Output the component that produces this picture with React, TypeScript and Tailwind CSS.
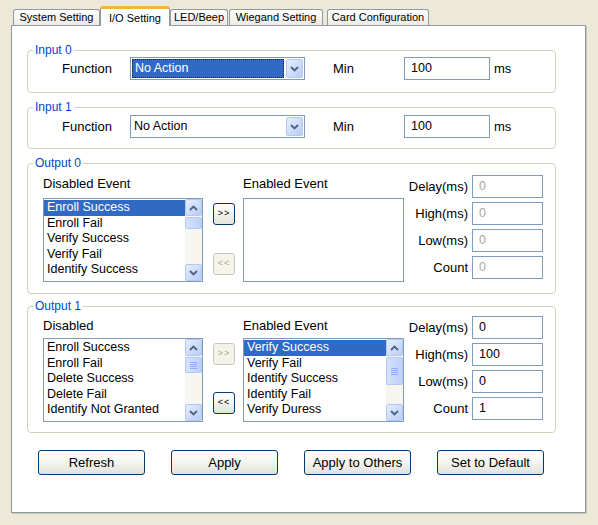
import React from 'react';

// XP-style "I/O Setting" property page

const ff = "font-['Liberation_Sans',Arial,sans-serif]";

function Chevron({ up = false }: { up?: boolean }) {
  return (
    <svg width="9" height="6" viewBox="0 0 9 6">
      <polyline
        points={up ? '1,5 4.5,1.5 8,5' : '1,1 4.5,4.5 8,1'}
        fill="none"
        stroke="#4D6185"
        strokeWidth="1.8"
      />
    </svg>
  );
}

function ArrowBox({ up = false, className = '' }: { up?: boolean; className?: string }) {
  return (
    <div
      className={`flex shrink-0 items-center justify-center rounded-[2px] border border-[#B4C8F4] bg-linear-to-br from-[#E6EEFE] to-[#B9CCF7] ${className}`}
    >
      <Chevron up={up} />
    </div>
  );
}

function ScrollBar({ thumb, grip = false }: { thumb: string; grip?: boolean }) {
  return (
    <div className="flex h-full w-[17px] shrink-0 flex-col bg-[#F6F5F0]">
      <ArrowBox up className="h-[17px] w-[17px]" />
      <div className="flex-1">
        <div
          className={`flex w-[17px] flex-col items-center justify-center gap-[1px] rounded-[2px] border border-[#B4C8F4] bg-linear-to-r from-[#D6E2FD] to-[#BDD0F8] ${thumb}`}
        >
          {grip && (
            <>
              <div className="h-[1px] w-[7px] bg-[#8DAEF6]" />
              <div className="h-[1px] w-[7px] bg-[#8DAEF6]" />
              <div className="h-[1px] w-[7px] bg-[#8DAEF6]" />
              <div className="h-[1px] w-[7px] bg-[#8DAEF6]" />
            </>
          )}
        </div>
      </div>
      <ArrowBox className="h-[17px] w-[17px]" />
    </div>
  );
}

function ListBox({
  items,
  selected = -1,
  thumb = '',
  grip = false,
}: {
  items: string[];
  selected?: number;
  thumb?: string;
  grip?: boolean;
}) {
  return (
    <div className="flex h-[84px] w-full border border-[#7F9DB9] bg-white">
      <div className="flex-1 overflow-hidden pt-[1px]">
        {items.map((t, i) => (
          <div
            key={t}
            className={`h-[15.5px] whitespace-nowrap pl-[3px] text-[12.5px] leading-[15.5px] ${
              i === selected ? 'bg-[#316AC5] text-white' : 'text-black'
            }`}
          >
            {t}
          </div>
        ))}
      </div>
      {items.length > 0 && <ScrollBar thumb={thumb} grip={grip} />}
    </div>
  );
}

function SmallBtn({ label, disabled = false }: { label: string; disabled?: boolean }) {
  return (
    <div
      className={`flex h-[22px] w-[22px] items-center justify-center rounded-[3px] border text-[9px] tracking-[1px] ${
        disabled
          ? 'border-[#C9C7BA] bg-[#F5F4EA] text-[#ACA899]'
          : 'border-[#003C74] bg-linear-to-b from-white to-[#E4E3DB] text-black'
      }`}
    >
      {label}
    </div>
  );
}

function Edit({ value, disabled = false, w }: { value: string; disabled?: boolean; w: string }) {
  return (
    <div
      className={`flex h-[23px] items-center border border-[#7F9DB9] bg-white pl-[6px] text-[12.5px] ${w} ${
        disabled ? 'text-[#ACA899]' : 'text-black'
      }`}
    >
      {value}
    </div>
  );
}

function Combo({ focused = false }: { focused?: boolean }) {
  return (
    <div className="flex h-[23px] w-[175px] border border-[#7F9DB9] bg-white p-[1px]">
      <div className="mr-[2px] flex-1">
        <div
          className={`flex h-full items-center pl-[2px] text-[12.5px] ${
            focused ? 'border border-dotted border-[#222] bg-[#316AC5] text-white' : 'text-black'
          }`}
        >
          No Action
        </div>
      </div>
      <ArrowBox className="h-full w-[17px]" />
    </div>
  );
}

function Group({ title, h, mt, children }: { title: string; h: string; mt: string; children: React.ReactNode }) {
  return (
    <fieldset className={`w-[529px] rounded-[4px] border border-[#D0D0BF] ${h} ${mt}`}>
      <legend className="ml-[5px] px-[2px] text-[12px] leading-[14px] text-[#0046D5]">{title}</legend>
      {children}
    </fieldset>
  );
}

function InputRow({ focused = false }: { focused?: boolean }) {
  return (
    <div className="flex h-[23px] items-center pl-[34px] text-[13px]">
      <span className="w-[68px]">Function</span>
      <Combo focused={focused} />
      <span className="ml-[28px] w-[71px]">Min</span>
      <Edit value="100" w="w-[86px]" />
      <span className="ml-[4px]">ms</span>
    </div>
  );
}

function Timing({ values, disabled = false, pt }: { values: string[]; disabled?: boolean; pt: string }) {
  const labels = ['Delay(ms)', 'High(ms)', 'Low(ms)', 'Count'];
  return (
    <div className={`flex w-[139px] flex-col gap-[4px] ${pt}`}>
      {labels.map((l, i) => (
        <div key={l} className="flex h-[23px] items-center justify-end gap-[4px] text-[13px]">
          <span>{l}</span>
          <Edit value={values[i]} disabled={disabled} w="w-[71px]" />
        </div>
      ))}
    </div>
  );
}

export default function App() {
  const tabs = [
    { label: 'System Setting', w: 'w-[87px]', ml: '' },
    { label: 'I/O Setting', w: 'w-[70px]', ml: '', active: true },
    { label: 'LED/Beep', w: 'w-[58px]', ml: '' },
    { label: 'Wiegand Setting', w: 'w-[94px]', ml: 'ml-[1px]' },
    { label: 'Card Configuration', w: 'w-[102px]', ml: 'ml-[4px]' },
  ];

  return (
    <div className={`h-[525px] w-[598px] bg-[#ECE9D8] pt-[6px] text-black ${ff}`}>
      {/* tab strip */}
      <div className="flex h-[19px] items-end pl-[13px]">
        {tabs.map((t) =>
          t.active ? (
            <div
              key={t.label}
              className={`relative z-10 -mb-[1px] flex h-[20px] justify-center rounded-t-[3px] border-x border-t-[3px] border-x-[#919B9C] border-t-[#F7B13C] bg-white pt-[1px] text-[11px] ${t.w} ${t.ml}`}
            >
              {t.label}
            </div>
          ) : (
            <div
              key={t.label}
              className={`flex h-[16px] items-center justify-center rounded-t-[3px] border-x border-t border-[#919B9C] bg-linear-to-b from-white to-[#ECEBE5] text-[11px] ${t.w} ${t.ml}`}
            >
              {t.label}
            </div>
          )
        )}
      </div>

      {/* page */}
      <div className="ml-[11px] h-[488px] w-[575px] border border-[#919B9C] bg-white pl-[15px] pt-[17px] shadow-[1px_1px_0_#C9C6B6]">
        <Group title="Input 0" h="h-[50px]" mt="">
          <InputRow focused />
        </Group>

        <Group title="Input 1" h="h-[49px]" mt="mt-[7px]">
          <div className="pt-[1px]">
            <InputRow />
          </div>
        </Group>

        <Group title="Output 0" h="h-[138px]" mt="mt-[7px]">
          <div className="flex pl-[15px]">
            <div className="w-[160px]">
              <div className="flex h-[28px] items-center text-[13px]">Disabled Event</div>
              <ListBox
                items={['Enroll Success', 'Enroll Fail', 'Verify Success', 'Verify Fail', 'Identify Success']}
                selected={0}
                thumb="mt-[1px] h-[12px]"
              />
            </div>
            <div className="ml-[10px] flex w-[22px] flex-col gap-[28px] pt-[33px]">
              <SmallBtn label=">>" />
              <SmallBtn label="<<" disabled />
            </div>
            <div className="ml-[8px] w-[161px]">
              <div className="flex h-[28px] items-center text-[13px]">Enabled Event</div>
              <ListBox items={[]} />
            </div>
            <Timing values={['0', '0', '0', '0']} disabled pt="pt-[5px]" />
          </div>
        </Group>

        <Group title="Output 1" h="h-[134px]" mt="mt-[5px]">
          <div className="flex pl-[15px]">
            <div className="w-[160px]">
              <div className="flex h-[25px] items-center text-[13px]">Disabled</div>
              <ListBox
                items={['Enroll Success', 'Enroll Fail', 'Delete Success', 'Delete Fail', 'Identify Not Granted']}
                thumb="mt-[1px] h-[16px]"
                grip
              />
            </div>
            <div className="ml-[10px] flex w-[22px] flex-col gap-[27px] pt-[30px]">
              <SmallBtn label=">>" disabled />
              <SmallBtn label="<<" />
            </div>
            <div className="ml-[8px] w-[161px]">
              <div className="flex h-[25px] items-center text-[13px]">Enabled Event</div>
              <ListBox
                items={['Verify Success', 'Verify Fail', 'Identify Success', 'Identify Fail', 'Verify Duress']}
                selected={0}
                thumb="mt-[1px] h-[28px]"
                grip
              />
            </div>
            <Timing values={['0', '100', '0', '1']} pt="pt-[3px]" />
          </div>
        </Group>

        {/* command buttons */}
        <div className="mt-[17px] flex gap-[26px] pl-[11px]">
          {['Refresh', 'Apply', 'Apply to Others', 'Set to Default'].map((b) => (
            <button
              key={b}
              className="h-[25px] w-[107px] rounded-[3px] border border-[#003C74] bg-linear-to-b from-white via-[#F4F4F0] to-[#E2E1D9] text-[13px] text-black"
            >
              {b}
            </button>
          ))}
        </div>
      </div>
    </div>
  );
}
